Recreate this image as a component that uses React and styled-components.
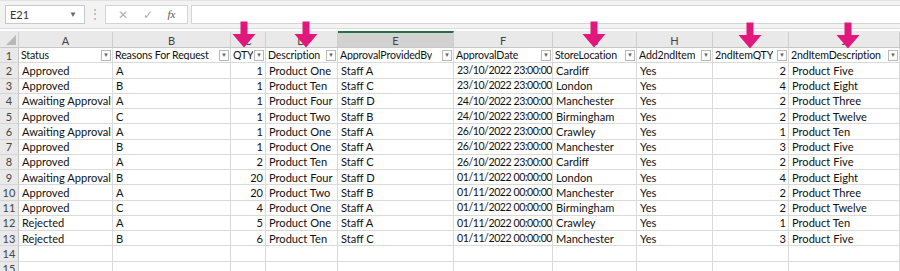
import React from 'react'
import styled, { createGlobalStyle } from 'styled-components'

const GLOBAL = createGlobalStyle`
	html, body {
		margin: 0;
		padding: 0;
		background: #ffffff;
		overflow: hidden;
	}
	* { box-sizing: border-box; }
`

const COLS = '19px 94px 118px 35px 72px 116px 99px 84px 76px 76px 111px'

const PAGE = styled.div`
	position: relative;
	width: 900px;
	height: 271px;
	overflow: hidden;
	font-family: Lato, 'Liberation Sans', sans-serif;
	font-size: 11.1px;
	color: #111;
	background: #fff;
`

const TOOLBAR = styled.div`
	display: flex;
	align-items: center;
	height: 29px;
	padding: 0 0 1px 5px;
	background: #f3f3f3;
	border-top: 1px solid #e2e2e2;
	border-bottom: 1px solid #dcdcdc;
`

const NAME_BOX = styled.div`
	display: flex;
	align-items: center;
	justify-content: space-between;
	width: 80px;
	height: 19px;
	padding: 0 7px 0 4px;
	background: #fff;
	border: 1px solid #c8c8c8;
	font-size: 11px;
	color: #333;
`

const CARET = styled.span`
	font-size: 8px;
	color: #6a6a6a;
`

const DOTS = styled.div`
	width: 20px;
	text-align: center;
	color: #a8a8a8;
	font-size: 12px;
	line-height: 1;
`

const FX_BOX = styled.div`
	display: flex;
	align-items: center;
	justify-content: space-around;
	width: 83px;
	height: 19px;
	padding: 0 4px;
	background: #fff;
	border: 1px solid #d4d4d4;
	color: #b0b0b0;
	font-size: 12px;
`

const FX = styled.span`
	font-family: 'Liberation Serif', serif;
	font-style: italic;
	color: #555;
	font-size: 11px;
`

const FORMULA = styled.div`
	flex: 1;
	height: 19px;
	margin-left: 3px;
	background: #fff;
	border: 1px solid #d4d4d4;
	border-right: none;
`

const GAP = styled.div`
	height: 2px;
	background: #ffffff;
`

const ROW = styled.div`
	display: grid;
	grid-template-columns: ${COLS};
	height: ${({ $h }) => $h};
`

const COL_HEAD = styled.div`
	display: flex;
	align-items: center;
	justify-content: center;
	background: ${({ $active }) => ($active ? '#d2d2d2' : '#e9e9e9')};
	border-right: 1px solid #cfcfcf;
	border-bottom: 1px solid #c6c6c6;
	border-top: 2px solid ${({ $active }) => ($active ? '#217346' : '#e9e9e9')};
	color: #444;
	font-size: 11px;
`

const CORNER = styled(COL_HEAD)`
	position: relative;
	&::after {
		content: '';
		position: absolute;
		right: 2px;
		bottom: 2px;
		border-left: 10px solid transparent;
		border-bottom: 10px solid #b8b8b8;
	}
`

const ROW_NUM = styled.div`
	display: flex;
	align-items: center;
	justify-content: center;
	background: #e9e9e9;
	border-right: 1px solid #c6c6c6;
	border-bottom: 1px solid #d6d6d6;
	color: #444;
	font-size: 11px;
`

const CELL = styled.div`
	display: flex;
	align-items: center;
	justify-content: ${({ $num }) => ($num ? 'flex-end' : 'flex-start')};
	padding: 0 2px 0 3px;
	border-right: 1px solid #dadada;
	border-bottom: 1px solid #dadada;
	white-space: nowrap;
	overflow: hidden;
	line-height: 1;
	font-size: ${({ $tight }) => ($tight ? '10.6px' : 'inherit')};
	letter-spacing: ${({ $tight }) => ($tight ? '-0.45px' : 'normal')};
`

const FILTER_CELL = styled(CELL)`
	justify-content: space-between;
	gap: 1px;
	padding: 0 1px 0 2px;
	font-size: 10.6px;
	letter-spacing: -0.15px;

	& > span:first-child {
		overflow: hidden;
	}
`

const FILTER_BTN = styled.span`
	display: flex;
	align-items: center;
	justify-content: center;
	flex: none;
	width: 10px;
	height: 11px;
	background: #fff;
	border: 1px solid #b9b9b9;
	color: #666;
	font-size: 6px;
	letter-spacing: 0;
`

const ARROW = styled.svg`
	position: absolute;
	top: ${({ $top }) => $top}px;
	left: ${({ $x }) => $x - 12}px;
	width: 24px;
	height: 27px;
`

const LETTERS = ['A', 'B', 'C', 'D', 'E', 'F', 'G', 'H', 'I', 'J']

const HEADERS = [
	'Status',
	'Reasons For Request',
	'QTY',
	'Description',
	'ApprovalProvidedBy',
	'ApprovalDate',
	'StoreLocation',
	'Add2ndItem',
	'2ndItemQTY',
	'2ndItemDescription',
]

const NUMERIC = [2, 8]
const DATE_COL = 5

const DATA = [
	['Approved', 'A', '1', 'Product One', 'Staff A', '23/10/2022 23:00:00', 'Cardiff', 'Yes', '2', 'Product Five'],
	['Approved', 'B', '1', 'Product Ten', 'Staff C', '23/10/2022 23:00:00', 'London', 'Yes', '4', 'Product Eight'],
	['Awaiting Approval', 'A', '1', 'Product Four', 'Staff D', '24/10/2022 23:00:00', 'Manchester', 'Yes', '2', 'Product Three'],
	['Approved', 'C', '1', 'Product Two', 'Staff B', '24/10/2022 23:00:00', 'Birmingham', 'Yes', '2', 'Product Twelve'],
	['Awaiting Approval', 'A', '1', 'Product One', 'Staff A', '26/10/2022 23:00:00', 'Crawley', 'Yes', '1', 'Product Ten'],
	['Approved', 'B', '1', 'Product One', 'Staff A', '26/10/2022 23:00:00', 'Manchester', 'Yes', '3', 'Product Five'],
	['Approved', 'A', '2', 'Product Ten', 'Staff C', '26/10/2022 23:00:00', 'Cardiff', 'Yes', '2', 'Product Five'],
	['Awaiting Approval', 'B', '20', 'Product Four', 'Staff D', '01/11/2022 00:00:00', 'London', 'Yes', '4', 'Product Eight'],
	['Approved', 'A', '20', 'Product Two', 'Staff B', '01/11/2022 00:00:00', 'Manchester', 'Yes', '2', 'Product Three'],
	['Approved', 'C', '4', 'Product One', 'Staff A', '01/11/2022 00:00:00', 'Birmingham', 'Yes', '2', 'Product Twelve'],
	['Rejected', 'A', '5', 'Product One', 'Staff A', '01/11/2022 00:00:00', 'Crawley', 'Yes', '1', 'Product Ten'],
	['Rejected', 'B', '6', 'Product Ten', 'Staff C', '01/11/2022 00:00:00', 'Manchester', 'Yes', '3', 'Product Five'],
	['', '', '', '', '', '', '', '', '', ''],
	['', '', '', '', '', '', '', '', '', ''],
]

// annotation arrows drawn over the header area
const ARROWS = [
	{ x: 244, top: 21 },
	{ x: 306, top: 21 },
	{ x: 594, top: 21 },
	{ x: 750, top: 22 },
	{ x: 848, top: 22 },
]

const PINK_ARROW = ({ x, top }) => (
	<ARROW $x={x} $top={top} viewBox="0 0 24 27">
		<path d="M8.5 0.5 H15.5 V13 H23.5 L12 26.5 L0.5 13 H8.5 Z" fill="#e2177c" strokeLinejoin="round" />
	</ARROW>
)

const APP = () => {
	return (
		<PAGE>
			<GLOBAL />
			{/* formula bar */}
			<TOOLBAR>
				<NAME_BOX>
					E21
					<CARET>▼</CARET>
				</NAME_BOX>
				<DOTS>⋮</DOTS>
				<FX_BOX>
					<span>✕</span>
					<span>✓</span>
					<FX>fx</FX>
				</FX_BOX>
				<FORMULA />
			</TOOLBAR>
			<GAP />

			{/* sheet */}
			<ROW $h="17px">
				<CORNER />
				{LETTERS.map((l) => (
					<COL_HEAD key={l} $active={l === 'E'}>
						{l}
					</COL_HEAD>
				))}
			</ROW>
			<ROW $h="15.25px">
				<ROW_NUM>1</ROW_NUM>
				{HEADERS.map((h) => (
					<FILTER_CELL key={h}>
						<span>{h}</span>
						<FILTER_BTN>▼</FILTER_BTN>
					</FILTER_CELL>
				))}
			</ROW>
			{DATA.map((row, i) => (
				<ROW key={i} $h="15.25px">
					<ROW_NUM>{i + 2}</ROW_NUM>
					{row.map((v, j) => (
						<CELL key={j} $num={NUMERIC.includes(j)} $tight={j === DATE_COL}>
							{v}
						</CELL>
					))}
				</ROW>
			))}

			{ARROWS.map((a) => (
				<PINK_ARROW key={a.x} {...a} />
			))}
		</PAGE>
	)
}

export default APP
